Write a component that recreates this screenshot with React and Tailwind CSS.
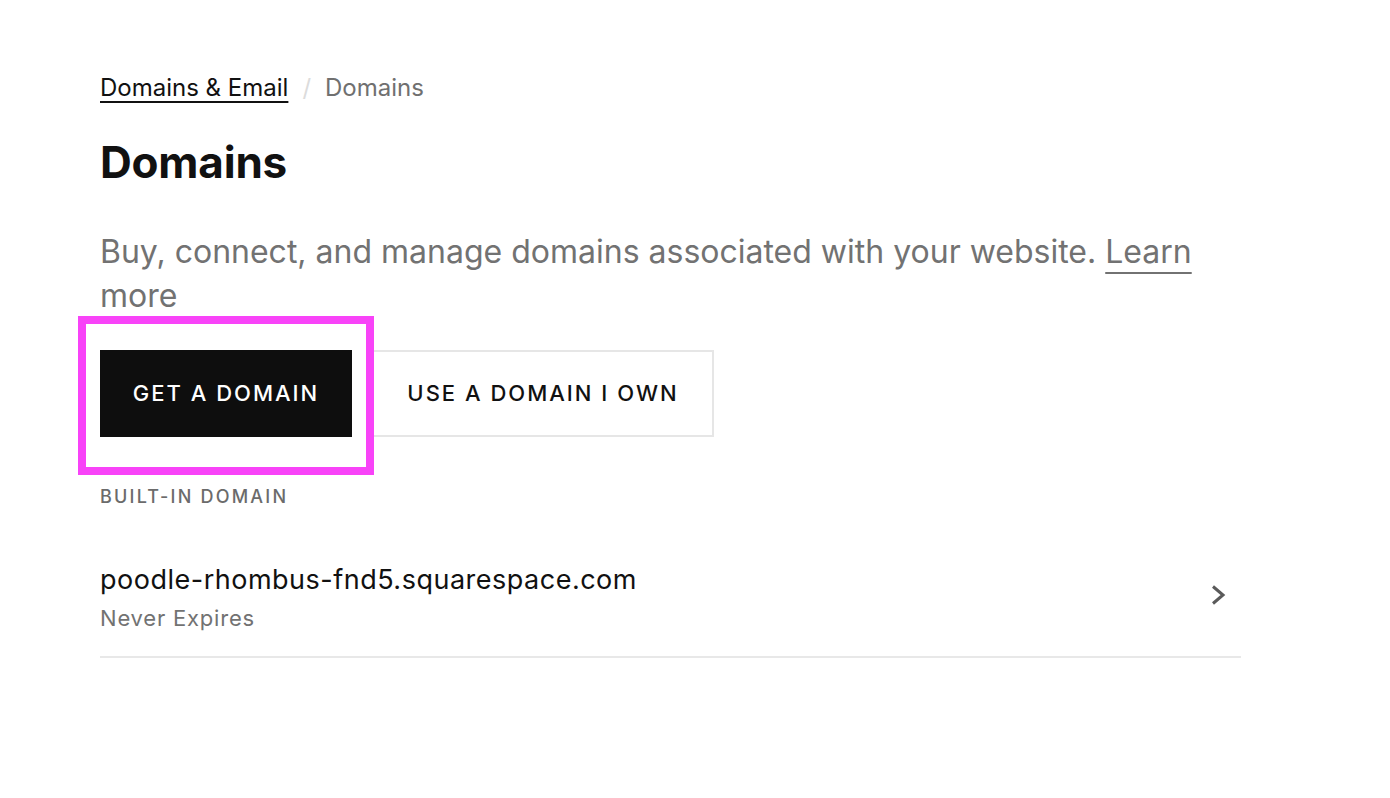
/* ================= PAGE ================= */
export default function App() {
  return (
    <div
      className="min-h-screen bg-white text-[#111]"
      style={{ fontFamily: 'Inter, "Liberation Sans", Arial, sans-serif' }}
    >
      <div className="w-[1141px] ml-[100px] pt-[72px]">
        {/* breadcrumb */}
        <nav className="flex items-center gap-[14px] text-[24px] leading-[32px]">
          <a href="#" className="text-[#111] underline underline-offset-[5px] decoration-2">
            Domains &amp; Email
          </a>
          <span className="text-[#dcdcdc]">/</span>
          <span className="text-[#707070]">Domains</span>
        </nav>

        <h1 className="mt-[32px] text-[44px] leading-[52px] font-bold tracking-[-0.2px]">
          Domains
        </h1>

        <p className="mt-[42px] text-[32px] leading-[44px] text-[#727272]">
          Buy, connect, and manage domains associated with your website.{" "}
          <a href="#" className="underline underline-offset-[9px] decoration-2">
            Learn more
          </a>
        </p>

        {/* actions */}
        <div className="mt-[32px] flex items-stretch gap-[20px]">
          <div className="relative">
            <button className="h-[87px] w-[252px] bg-[#0e0e0e] text-white text-[22px] font-medium tracking-[2px]">
              GET A DOMAIN
            </button>
            <div className="pointer-events-none absolute left-[-22px] top-[-34px] w-[296px] h-[159px] border-[8px] border-[#f843f8]"></div>
          </div>
          <button className="h-[87px] w-[342px] border-2 border-[#e6e6e6] text-[22px] font-medium tracking-[2px] text-[#111]">
            USE A DOMAIN I OWN
          </button>
        </div>

        <div className="mt-[50px] text-[18px] leading-[20px] font-medium tracking-[2.2px] text-[#6b6b6b]">
          BUILT-IN DOMAIN
        </div>

        {/* domain row */}
        <div className="mt-[55px] flex items-center justify-between border-b-2 border-[#e8e8e8] pb-[24px]">
          <div>
            <div className="text-[27px] leading-[36px] tracking-[0.5px] text-[#111]">
              poodle-rhombus-fnd5.squarespace.com
            </div>
            <div className="mt-[6px] text-[22px] leading-[28px] tracking-[0.8px] text-[#727272]">
              Never Expires
            </div>
          </div>
          <svg
            className="mr-[14px] mt-[-4px] h-[20px] w-[16px] text-[#5a5a5a]"
            viewBox="0 0 16 20"
            fill="none"
            stroke="currentColor"
            strokeWidth="3"
            strokeLinecap="butt"
            strokeLinejoin="miter"
          >
            <polyline points="2,1.5 12,10 2,18.5" />
          </svg>
        </div>
      </div>
    </div>
  );
}
